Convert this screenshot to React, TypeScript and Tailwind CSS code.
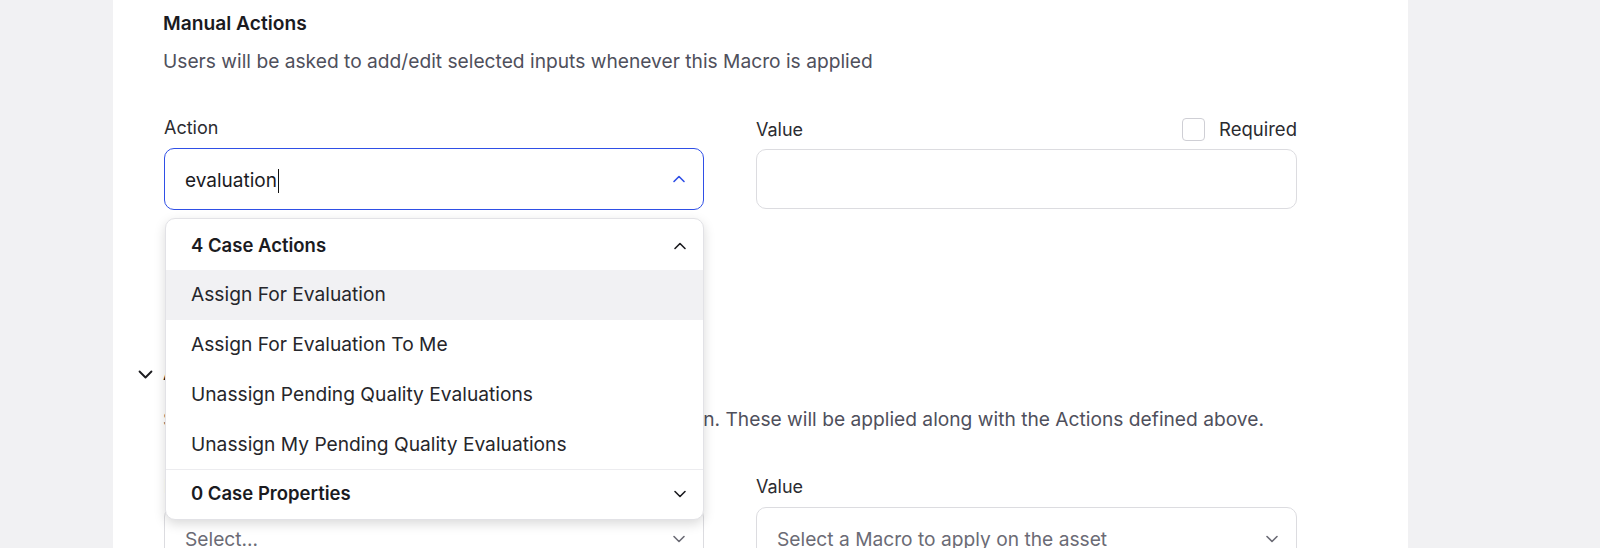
import React from "react";

const ChevronUp = ({ className = "" }: { className?: string }) => (
  <svg viewBox="0 0 16 16" className={className} fill="none" stroke="currentColor" strokeWidth="1.6" strokeLinecap="round" strokeLinejoin="round">
    <path d="M3 10.5 L8 5.5 L13 10.5" />
  </svg>
);
const ChevronDown = ({ className = "" }: { className?: string }) => (
  <svg viewBox="0 0 16 16" className={className} fill="none" stroke="currentColor" strokeWidth="1.6" strokeLinecap="round" strokeLinejoin="round">
    <path d="M3 5.5 L8 10.5 L13 5.5" />
  </svg>
);

export default function App() {
  return (
    <div
      className="flex h-[548px] w-full overflow-hidden bg-[#f1f1f3]"
      style={{ fontFamily: "Inter, 'Noto Sans', sans-serif" }}
    >
      <div className="w-[113px] shrink-0" />
      <div className="w-[1295px] shrink-0 bg-white pl-[50px] pt-[11px]">
        {/* Manual actions */}
        <div className="text-[19.2px] font-semibold leading-[25px] text-[#1b1b1f]">Manual Actions</div>
        <div className="mt-[12px] text-[19.2px] leading-[26px] text-[#4f505c]">
          Users will be asked to add/edit selected inputs whenever this Macro is applied
        </div>

        <div className="mt-[42px] flex gap-[52px] pl-[1px]">
          <div className="relative w-[540px]">
            <div className="text-[18px] leading-[23px] text-[#2b2b30]">Action</div>
            <div className="mt-[9px] flex h-[62px] items-center justify-between rounded-[10px] border-[1.5px] border-[#2f4fe6] pl-[20px] pr-[16px] pt-[4px]">
              <div className="flex items-center text-[19px] text-[#1b1b1f]">
                evaluation<span className="ml-[1px] inline-block h-[24px] w-[1.5px] bg-[#111]" />
              </div>
              <ChevronUp className="mb-[4px] h-[16px] w-[16px] text-[#2f4fe6]" />
            </div>

            {/* dropdown overlay */}
            <div className="absolute left-[1px] top-[102px] z-10 w-[539px] overflow-hidden rounded-[10px] border border-[#e2e2e6] bg-white shadow-[0_4px_12px_rgba(0,0,0,0.15)]">
              <div className="flex h-[51px] items-center justify-between pl-[25px] pr-[15px] pt-[2px]">
                <span className="text-[18.5px] font-semibold text-[#1b1b1f]">4 Case Actions</span>
                <ChevronUp className="h-[16px] w-[16px] text-[#1b1b1f]" />
              </div>
              <div className="flex h-[49.7px] items-center bg-[#f1f1f3] pl-[25px] text-[19.2px] text-[#26262b]">Assign For Evaluation</div>
              <div className="flex h-[49.7px] items-center pl-[25px] text-[19.2px] text-[#26262b]">Assign For Evaluation To Me</div>
              <div className="flex h-[49.7px] items-center pl-[25px] text-[19.2px] text-[#26262b]">Unassign Pending Quality Evaluations</div>
              <div className="flex h-[49.7px] items-center pl-[25px] text-[19.2px] text-[#26262b]">Unassign My Pending Quality Evaluations</div>
              <div className="flex h-[50px] items-center justify-between border-t border-[#ececef] pl-[25px] pr-[15px]">
                <span className="text-[18.5px] font-semibold text-[#1b1b1f]">0 Case Properties</span>
                <ChevronDown className="h-[16px] w-[16px] text-[#1b1b1f]" />
              </div>
            </div>
          </div>

          <div className="w-[541px] pt-[2px]">
            <div className="flex h-[23px] items-center justify-between">
              <div className="text-[18px] leading-[23px] text-[#2b2b30]">Value</div>
              <label className="flex items-center gap-[14px]">
                <span className="inline-block h-[23px] w-[23px] rounded-[4px] border-[1.5px] border-[#cfcfd5] bg-white" />
                <span className="text-[18.5px] text-[#2b2b30]">Required</span>
              </label>
            </div>
            <div className="mt-[8px] h-[60px] rounded-[10px] border-[1.5px] border-[#dcdce0]" />
          </div>
        </div>

        {/* Second section */}
        <div className="relative mt-[151px]">
          <div className="absolute left-[-27px] top-[4px]">
            <ChevronDown className="h-[19px] w-[19px] text-[#1b1b1f]" />
          </div>
          <div className="text-[19px] font-semibold leading-[25px] text-[#1b1b1f]">Apply Macros</div>
          <div className="mt-[20px] whitespace-nowrap text-[19.2px] leading-[26px] text-[#4f505c]">
            Select Macros which will also be applied on the conversation. These will be applied along with the Actions defined above.
          </div>
          <div className="mt-[43px] flex gap-[52px] pl-[1px]">
            <div className="w-[540px]">
              <div className="text-[18px] leading-[23px] text-[#2b2b30]">Macro</div>
              <div className="mt-[9px] flex h-[64px] items-center justify-between rounded-[10px] border-[1.5px] border-[#dcdce0] pl-[20px] pr-[16px]">
                <span className="text-[19.2px] text-[#6b6b75]">Select...</span>
                <ChevronDown className="h-[16px] w-[16px] text-[#6b6b75]" />
              </div>
            </div>
            <div className="w-[541px]">
              <div className="text-[18px] leading-[23px] text-[#2b2b30]">Value</div>
              <div className="mt-[9px] flex h-[64px] items-center justify-between rounded-[10px] border-[1.5px] border-[#dcdce0] pl-[20px] pr-[16px]">
                <span className="text-[19.2px] text-[#6b6b75]">Select a Macro to apply on the asset</span>
                <ChevronDown className="h-[16px] w-[16px] text-[#6b6b75]" />
              </div>
            </div>
          </div>
        </div>
      </div>
    </div>
  );
}
